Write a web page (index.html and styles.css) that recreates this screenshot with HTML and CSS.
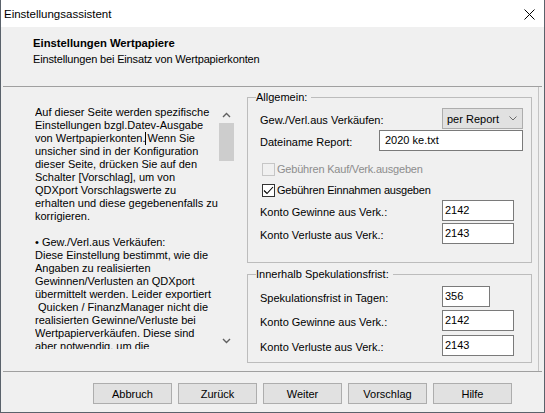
FILE: index.html
```html
<!DOCTYPE html>
<html lang="de">
<head>
<meta charset="utf-8">
<title>Einstellungsassistent</title>
<link rel="stylesheet" href="styles.css">
</head>
<body>
<div class="window">
  <div class="titlebar">
    <span class="title">Einstellungsassistent</span>
    <svg class="close" width="11" height="11" viewBox="0 0 11 11"><path d="M0.5 0.5 L10.5 10.5 M10.5 0.5 L0.5 10.5" stroke="#000" stroke-width="1" fill="none"/></svg>
  </div>
  <div class="header">
    <div class="h-title">Einstellungen Wertpapiere</div>
    <div class="h-sub">Einstellungen bei Einsatz von Wertpapierkonten</div>
  </div>
  <div class="content">
    <div class="left">
      <div class="scrollbox">
        <div class="text">Auf dieser Seite werden spezifische
Einstellungen bzgl.Datev-Ausgabe
von Wertpapierkonten.<span class="caret"></span>Wenn Sie
unsicher sind in der Konfiguration
dieser Seite, drücken Sie auf den
Schalter [Vorschlag], um von
QDXport Vorschlagswerte zu
erhalten und diese gegebenenfalls zu
korrigieren.

• Gew./Verl.aus Verkäufen:
Diese Einstellung bestimmt, wie die
Angaben zu realisierten
Gewinnen/Verlusten an QDXport
übermittelt werden. Leider exportiert
 Quicken / FinanzManager nicht die
realisierten Gewinne/Verluste bei
Wertpapierverkäufen. Diese sind
aber notwendig, um die</div>
        <div class="scrollbar">
          <div class="sb-btn"><svg width="9" height="6" viewBox="0 0 9 6"><path d="M1 5 L4.5 1.5 L8 5" stroke="#606060" stroke-width="1.4" fill="none"/></svg></div>
          <div class="sb-thumb"></div>
          <div class="sb-track"></div>
          <div class="sb-btn"><svg width="9" height="6" viewBox="0 0 9 6"><path d="M1 1 L4.5 4.5 L8 1" stroke="#606060" stroke-width="1.4" fill="none"/></svg></div>
        </div>
      </div>
    </div>
    <div class="right">
      <fieldset class="group g1">
        <legend>Allgemein:</legend>
        <div class="gbody gbody1">
          <div class="row r-first">
            <span class="lbl">Gew./Verl.aus Verkäufen:</span>
            <div class="combo"><span>per Report</span><svg width="8" height="5" viewBox="0 0 8 5"><path d="M0.5 0.5 L4 4 L7.5 0.5" stroke="#6a6a6a" stroke-width="1" fill="none"/></svg></div>
          </div>
          <div class="row r-tight">
            <span class="lbl lbl-short">Dateiname Report:</span>
            <div class="input input-wide">2020 ke.txt</div>
          </div>
          <div class="row chk-row chk-first">
            <span class="chk chk-disabled"></span>
            <span class="chk-lbl disabled">Gebühren Kauf/Verk.ausgeben</span>
          </div>
          <div class="row chk-row chk-second">
            <span class="chk"><svg width="11" height="11" viewBox="0 0 11 11"><path d="M1 5.5 L4 8.5 L10 2" stroke="#000" stroke-width="1.1" fill="none"/></svg></span>
            <span class="chk-lbl">Gebühren Einnahmen ausgeben</span>
          </div>
          <div class="row r-flush">
            <span class="lbl">Konto Gewinne aus Verk.:</span>
            <div class="input input-num">2142</div>
          </div>
          <div class="row r-gap2">
            <span class="lbl">Konto Verluste aus Verk.:</span>
            <div class="input input-num">2143</div>
          </div>
        </div>
      </fieldset>
      <fieldset class="group g2">
        <legend>Innerhalb Spekulationsfrist:</legend>
        <div class="gbody gbody2">
          <div class="row r-first2">
            <span class="lbl">Spekulationsfrist in Tagen:</span>
            <div class="input input-small">356</div>
          </div>
          <div class="row r-gap3">
            <span class="lbl">Konto Gewinne aus Verk.:</span>
            <div class="input input-num">2142</div>
          </div>
          <div class="row r-gap4">
            <span class="lbl">Konto Verluste aus Verk.:</span>
            <div class="input input-num">2143</div>
          </div>
        </div>
      </fieldset>
    </div>
  </div>
  <div class="footer">
    <button class="btn">Abbruch</button>
    <button class="btn">Zurück</button>
    <button class="btn">Weiter</button>
    <button class="btn">Vorschlag</button>
    <button class="btn">Hilfe</button>
  </div>
</div>
</body>
</html>
```

FILE: styles.css
```css
* { box-sizing: border-box; }
html, body { margin: 0; padding: 0; background: #f0f0f0; }
body {
  font-family: "Liberation Sans", Arial, sans-serif;
  font-size: 11px;
  color: #000;
}
.window {
  width: 545px;
  height: 413px;
  background: #f0f0f0;
  border-left: 1px solid #5a626b;
  border-right: 1px solid #5a626b;
  border-bottom: 1px solid #5a626b;
  display: flex;
  flex-direction: column;
}
.titlebar {
  height: 27px;
  flex: none;
  background: #fff;
  display: flex;
  align-items: center;
  justify-content: space-between;
  padding: 0 9px 0 3px;
}
.title { font-size: 11.5px; }
.close { display: block; margin-top: 1px; }
.header {
  height: 60px;
  flex: none;
  margin: 0 2px;
  padding: 8px 0 0 30px;
  border-bottom: 1px solid #a0a0a0;
  line-height: 16px;
}
.h-title { font-weight: bold; font-size: 11.25px; }
.h-sub { letter-spacing: -0.15px; }
.content {
  height: 284px;
  flex: none;
  display: flex;
}
.left {
  width: 246px;
  flex: none;
  padding: 19px 0 0 34px;
}
.scrollbox {
  width: 200px;
  height: 243px;
  display: flex;
}
.text {
  flex: 1;
  overflow: hidden;
  white-space: pre;
  line-height: 13px;
}
.caret {
  display: inline-block;
  width: 1px;
  height: 13px;
  background: #000;
  vertical-align: -3px;
  margin: 0 1px 0 0;
}
.scrollbar {
  width: 17px;
  flex: none;
  display: flex;
  flex-direction: column;
}
.sb-btn {
  height: 17px;
  display: flex;
  align-items: center;
  justify-content: center;
}
.sb-thumb {
  height: 38px;
  margin: 0 1px;
  background: #cdcdcd;
}
.sb-track { flex: 1; }
.right {
  width: 292px;
  flex: none;
  padding-top: 4px;
  border-right: 1px solid #c4c4c4;
}
.group {
  width: 285px;
  margin: 0;
  padding: 0;
  min-width: 0;
  border: 1px solid #bcbcbc;
}
.g2 { margin-top: 5px; }
.group legend {
  margin-left: 8px;
  padding: 0 4px 0 0;
  line-height: 13px;
}
.gbody1 { padding-bottom: 18px; }
.gbody2 { padding-bottom: 6px; }
.row {
  display: flex;
  align-items: center;
  height: 21px;
  padding-left: 12px;
}
.r-first { margin-top: 4px; }
.r-tight { margin-top: 1px; }
.chk-first { margin-top: 7px; height: 22px; }
.chk-second { height: 20px; }
.r-flush { margin-top: 0; }
.r-gap2 { margin-top: 2px; }
.r-first2 { margin-top: 5px; }
.r-gap3 { margin-top: 3px; }
.r-gap4 { margin-top: 4px; }
.lbl {
  width: 182px;
  flex: none;
  padding-top: 3px;
}
.lbl-short { width: 119px; }
.combo {
  width: 81px;
  height: 21px;
  background: #e1e1e1;
  border: 1px solid #adadad;
  display: flex;
  align-items: center;
  justify-content: space-between;
  padding: 0 5px 0 4px;
}
.combo svg { display: block; }
.input {
  height: 21px;
  background: #fff;
  border: 1px solid #7a7a7a;
  padding: 1px 0 0 2px;
  line-height: 16px;
}
.input-wide { width: 144px; padding-left: 5px; }
.input-num { width: 72px; }
.input-small { width: 48px; }
.chk-row { padding-left: 14px; }
.chk {
  width: 13px;
  height: 13px;
  flex: none;
  background: #fff;
  border: 1px solid #333;
  display: flex;
  align-items: center;
  justify-content: center;
}
.chk svg { display: block; }
.chk-disabled {
  background: #f0f0f0;
  border-color: #c6c6c6;
}
.chk-lbl { margin-left: 2px; letter-spacing: -0.2px; }
.disabled { color: #8d8d8d; }
.footer {
  flex: 1;
  margin: 0 2px;
  border-top: 1px solid #a0a0a0;
  padding: 11px 0 0 90px;
  display: flex;
  align-items: flex-start;
  gap: 6px;
}
.btn {
  width: 79px;
  height: 21px;
  margin: 0;
  padding: 0;
  background: #e1e1e1;
  border: 1px solid #adadad;
  border-radius: 0;
  font-family: inherit;
  font-size: 11px;
  color: #000;
}
```
